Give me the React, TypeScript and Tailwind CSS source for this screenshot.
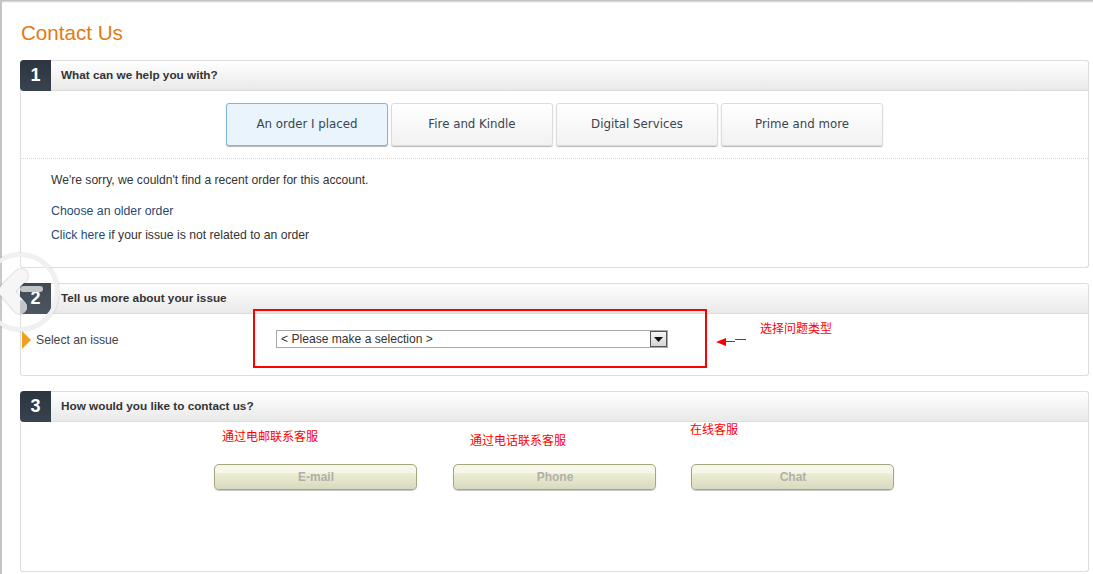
const sans = 'font-["Liberation_Sans",Arial,sans-serif]';

const tabs = ['An order I placed', 'Fire and Kindle', 'Digital Services', 'Prime and more'];

function SectionHeader({ num, title }: { num: number; title: string }) {
  return (
    <div className="flex h-[31px] rounded-t-[3px] border border-l-0 border-[#dddddd] bg-gradient-to-b from-white to-[#e9e9e9]">
      <div className="-mt-px -mb-px flex h-[31px] w-[31px] items-center justify-center rounded-tl-[4px] rounded-bl-[4px] bg-gradient-to-b from-[#2c3540] to-[#38434f] pb-px text-[18px] font-bold text-white">
        {num}
      </div>
      <div className="flex items-center pb-[2px] pl-[10px] text-[11.75px] font-bold text-[#333333]">{title}</div>
    </div>
  );
}

function Note({ className, children }: { className: string; children: string }) {
  return (
    <div className={`absolute font-["Noto_Sans_CJK_SC",sans-serif] text-[12px] leading-[14px] text-[#ff0000] ${className}`}>
      {children}
    </div>
  );
}

function ContactButton({ label }: { label: string }) {
  return (
    <div className="relative flex h-[26px] w-[203px] items-center justify-center overflow-hidden rounded-[5px] border border-[#a5a580] bg-[#f6f6e9] pl-px text-[12px] font-bold text-[#b0b0a8] shadow-[0_1px_1px_#c5c5c5]">
      <div className="absolute inset-x-0 top-[8px] bottom-0 rounded-t-[3px] bg-gradient-to-b from-[#eeeed4] to-[#d9d9c0]" />
      <span className="relative">{label}</span>
    </div>
  );
}

export default function App() {
  return (
    <div className={`relative h-[574px] w-[1093px] overflow-hidden bg-white ${sans}`}>
      <div className="absolute inset-x-0 top-0 h-[3px] bg-gradient-to-b from-[#b5b5b5] to-white" />
      <div className="absolute inset-y-0 left-0 w-[2px] bg-[#c4c4c4]" />

      <div className="pl-[20px] pr-[4px]">
        <h1 className="pt-[20px] pb-[15px] pl-px text-[20.6px] leading-[25px] font-normal text-[#e47911]">Contact Us</h1>

        <section>
          <SectionHeader num={1} title="What can we help you with?" />
          <div className="h-[177px] rounded-b-[3px] border border-t-0 border-[#dddddd]">
            <div className="flex h-[68px] justify-center gap-[3px] border-b border-dotted border-[#d5d5d5] pt-[12px]">
              {tabs.map((tab, i) => (
                <div
                  key={tab}
                  className={
                    i === 0
                      ? 'flex h-[43px] w-[162px] items-center justify-center rounded-[3px] border border-[#7fb5e0] bg-[#e9f4fd] font-["DejaVu_Sans",sans-serif] text-[11.8px] text-[#3a4450] shadow-[0_1px_1px_#b5b5b5]'
                      : 'flex h-[43px] w-[162px] items-center justify-center rounded-[3px] border border-[#dcdcdc] bg-gradient-to-b from-white to-[#f2f2f2] font-["DejaVu_Sans",sans-serif] text-[11.8px] text-[#3a4450] shadow-[0_1px_1px_#b5b5b5]'
                  }
                >
                  {tab}
                </div>
              ))}
            </div>
            <div className="pt-[13px] pl-[30px] text-[12.1px] leading-[16px] text-[#333333]">
              <p>We're sorry, we couldn't find a recent order for this account.</p>
              <p className="mt-[15px] text-[12.3px] text-[#1f4a78]">Choose an older order</p>
              <p className="mt-[8px] text-[12.2px]">
                <span className="text-[#1f4a78]">Click here</span> if your issue is not related to an order
              </p>
            </div>
          </div>
        </section>

        <section className="mt-[15px]">
          <SectionHeader num={2} title="Tell us more about your issue" />
          <div className="flex h-[62px] rounded-b-[3px] border border-t-0 border-[#dddddd]">
            <div className="mt-[17px] ml-px h-0 w-0 border-y-[9px] border-l-[9px] border-y-transparent border-l-[#f0a020]" />
            <div className="w-[245px] pt-[18px] pl-[5px] text-[12.2px] leading-[16px] text-[#444444]">Select an issue</div>
            <div className="mt-[16px] flex h-[18px] w-[392px] items-center justify-between border border-[#a9a9a9] pl-[4px] text-[12.1px] text-[#333333]">
              <span>&lt; Please make a selection &gt;</span>
              <span className="flex h-[16px] w-[17px] items-center justify-center border border-[#555555] bg-gradient-to-b from-[#f5f5f5] to-[#d5d5d5]">
                <svg width="9" height="5" viewBox="0 0 9 5">
                  <path d="M0 0h9L4.5 5z" fill="#111111" />
                </svg>
              </span>
            </div>
          </div>
        </section>

        <section className="mt-[15px]">
          <SectionHeader num={3} title="How would you like to contact us?" />
          <div className="flex h-[150px] gap-[35px] rounded-b-[3px] border border-t-0 border-[#dddddd] pt-[42px] pl-[193px]">
            <div className="mr-px">
              <ContactButton label="E-mail" />
            </div>
            <ContactButton label="Phone" />
            <ContactButton label="Chat" />
          </div>
        </section>
      </div>

      {/* annotations drawn on top of the page */}
      <div className="absolute top-[309px] left-[253px] h-[59px] w-[454px] border-2 border-[#ff0000]" />
      <svg className="absolute top-[335px] left-[715px]" width="34" height="12" viewBox="0 0 34 12">
        <path d="M1 7 11 3v8z" fill="#ff0000" />
        <path d="M11 6.5h9M20 4.5h11" stroke="#ff0000" strokeWidth="1" />
      </svg>
      <Note className="top-[321px] left-[760px]">选择问题类型</Note>
      <Note className="top-[429px] left-[222px]">通过电邮联系客服</Note>
      <Note className="top-[433px] left-[470px]">通过电话联系客服</Note>
      <Note className="top-[422px] left-[690px]">在线客服</Note>

      {/* previous-slide overlay */}
      <div className="absolute top-[253px] left-[-19px] h-[78px] w-[78px] rounded-full border-[4px] border-[#f0f0f0] bg-white/10 shadow-[0_0_2px_rgba(0,0,0,0.25)]" />
      <svg className="absolute top-[262px] left-0" width="56" height="60" viewBox="0 0 56 60">
        <rect x="20" y="24" width="23" height="6" rx="3" fill="#c2c5c8" />
        <path
          d="M21 14 6 29l14 16"
          fill="none"
          stroke="#f6f6f6"
          strokeWidth="14"
          strokeLinecap="round"
          strokeLinejoin="round"
          className="drop-shadow-[0_0_1px_rgba(0,0,0,0.3)]"
        />
        <path d="M20 38a7 7 0 0 1 0 14z" fill="#c2c5c8" />
      </svg>
    </div>
  );
}
